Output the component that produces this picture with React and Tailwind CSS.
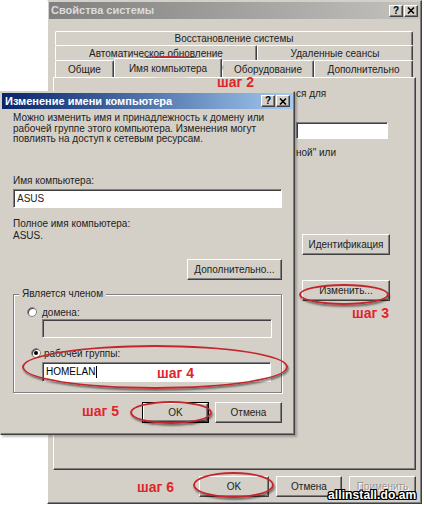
import React from "react";

// Windows classic (XP) look: two dialogs, one over the other, with red step marks

const raised =
  "bg-[#d4d0c8] border border-t-white border-l-white border-r-[#404040] border-b-[#404040] shadow-[inset_-1px_-1px_0_#808080]";
const sunken =
  "border border-t-[#808080] border-l-[#808080] border-r-white border-b-white shadow-[inset_1px_1px_0_#404040]";

function Button({ children, className = "", isDefault = false, disabled = false }) {
  const btn = (
    <div
      className={`${raised} flex items-center justify-center h-full w-full ${
        disabled ? "text-[#9a9690] [text-shadow:1px_1px_0_#fff]" : "text-[#222]"
      }`}
    >
      {children}
    </div>
  );
  if (isDefault) {
    return <div className={`border border-black ${className}`}>{btn}</div>;
  }
  return <div className={className}>{btn}</div>;
}

function CaptionButtons() {
  return (
    <div className="flex gap-[1px]">
      <div className={`${raised} w-[14px] h-[12px] flex items-center justify-center text-[10px] font-bold leading-none text-black`}>
        ?
      </div>
      <div className={`${raised} w-[14px] h-[12px] flex items-center justify-center`}>
        <svg width="8" height="7" viewBox="0 0 8 7">
          <path d="M1 0.5 L7 6.5 M7 0.5 L1 6.5" stroke="#000" strokeWidth="1.6" />
        </svg>
      </div>
    </div>
  );
}

function Tab({ label, className = "" }) {
  return (
    <div
      className={`flex items-center justify-center bg-[#d4d0c8] border-t border-l border-r border-t-white border-l-white border-r-[#404040] rounded-t-[2px] shadow-[inset_-1px_0_0_#808080] ${className}`}
    >
      {label}
    </div>
  );
}

function Radio({ checked }) {
  return (
    <span className="w-[10px] h-[10px] rounded-full bg-white border border-[#808080] shadow-[inset_1px_1px_0_#404040] flex items-center justify-center">
      {checked && <span className="w-[4px] h-[4px] rounded-full bg-black" />}
    </span>
  );
}

function Ellipse({ className }) {
  return (
    <div
      className={`absolute rounded-[50%] border-2 border-[#c4262c] shadow-[1px_2px_2px_rgba(0,0,0,0.45)] ${className}`}
    />
  );
}

function Step({ children, className }) {
  return (
    <div className={`absolute text-[14px] leading-[14px] font-bold text-[#e0252b] ${className}`}>
      {children}
    </div>
  );
}

function SystemProperties() {
  return (
    <div className="absolute left-[47px] top-0 w-[375px] h-[504px] bg-[#d4d0c8] border border-t-[#d4d0c8] border-l-white border-r-[#404040] border-b-[#404040] shadow-[inset_-1px_-1px_0_#808080] flex flex-col">
      {/* title */}
      <div className="mx-[1px] mt-[1px] h-[17px] bg-gradient-to-r from-[#808080] to-[#c4c2be] flex items-center justify-between pl-[2px] pr-[2px]">
        <span className="text-[11px] font-bold text-[#dcdcdc]">Свойства системы</span>
        <CaptionButtons />
      </div>

      {/* tabs */}
      <div className="mt-[12px] ml-[7px] w-[358px] flex flex-col text-[#222]">
        <Tab label="Восстановление системы" className="h-[14px] w-full" />
        <div className="flex h-[15px]">
          <Tab label="Автоматическое обновление" className="w-[202px]" />
          <Tab label="Удаленные сеансы" className="w-[156px]" />
        </div>
        <div className="flex h-[17px] items-end">
          <Tab label="Общие" className="w-[59px] h-[17px]" />
          <Tab label="Имя компьютера" className="w-[108px] h-[19px] relative z-10" />
          <Tab label="Оборудование" className="w-[92px] h-[17px]" />
          <Tab label="Дополнительно" className="w-[99px] h-[17px]" />
        </div>
      </div>

      {/* panel */}
      <div className="ml-[5px] w-[363px] h-[393px] border border-t-white border-l-white border-r-[#404040] border-b-[#404040] shadow-[inset_-1px_-1px_0_#808080] flex flex-col text-[#222]">
        <div className="ml-[242px] mt-[10px] leading-[11px]">ся для</div>
        <div className={`${sunken} bg-white ml-[242px] mt-[23px] w-[92px] h-[17px]`} />
        <div className="ml-[242px] mt-[8px] leading-[11px]">ной" или</div>
        <Button className="self-end mr-[25px] mt-[76px] w-[88px] h-[21px]">Идентификация</Button>
        <Button className="self-end mr-[25px] mt-[25px] w-[88px] h-[21px]">Изменить...</Button>
      </div>

      {/* bottom buttons */}
      <div className="mt-[6px] flex justify-end gap-[7px] pr-[5px] h-[21px]">
        <Button className="w-[70px] h-full">OK</Button>
        <Button className="w-[66px] h-full">Отмена</Button>
        <Button className="w-[67px] h-full" disabled>
          Применить
        </Button>
      </div>
    </div>
  );
}

function ChangeNameDialog() {
  return (
    <div className="absolute left-0 top-[91px] w-[295px] h-[344px] bg-[#d4d0c8] border border-t-[#d4d0c8] border-l-[#d4d0c8] border-r-[#404040] border-b-[#404040] shadow-[inset_-1px_-1px_0_#808080,2px_2px_2px_rgba(0,0,0,0.25)] flex flex-col text-[#222]">
      <div className="mx-[1px] mt-[1px] h-[16px] bg-gradient-to-r from-[#0a246a] to-[#a6caf0] flex items-center justify-between pl-[3px] pr-[3px]">
        <span className="text-[11px] font-bold text-white">Изменение имени компьютера</span>
        <CaptionButtons />
      </div>

      <div className="px-[12px] flex flex-col">
        <p className="mt-[4px] leading-[10.5px]">
          Можно изменить имя и принадлежность к домену или рабочей группе этого компьютера. Изменения могут повлиять на доступ к сетевым ресурсам.
        </p>

        <div className="mt-[30px] leading-[11px]">Имя компьютера:</div>
        <div className={`${sunken} bg-white mt-[3px] h-[19px] flex items-center pl-[3px]`}>ASUS</div>

        <div className="mt-[10px] leading-[11px]">Полное имя компьютера:</div>
        <div className="mt-[1px] leading-[11px]">ASUS.</div>

        <Button className="self-end mt-[18px] w-[95px] h-[21px]">Дополнительно...</Button>

        {/* group box */}
        <div className="relative mt-[14px] h-[99px] border border-[#808080] shadow-[1px_1px_0_#fff,inset_1px_1px_0_#fff] flex flex-col">
          <span className="absolute -top-[7px] left-[5px] px-[3px] bg-[#d4d0c8] leading-[11px]">Является членом</span>
          <div className="mt-[12px] ml-[13px] flex items-center gap-[5px] leading-[11px]">
            <Radio />
            <span>домена:</span>
          </div>
          <div className={`${sunken} bg-[#d4d0c8] ml-[28px] mt-[1px] w-[230px] h-[19px]`} />
          <div className="mt-[10px] ml-[17px] flex items-center gap-[3px] leading-[11px]">
            <Radio checked />
            <span>рабочей группы:</span>
          </div>
          <div className={`${sunken} bg-white ml-[28px] mt-[3px] w-[229px] h-[20px] flex items-center pl-[3px] text-black`}>
            HOMELAN<span className="ml-[1px] w-[1px] h-[12px] bg-black" />
          </div>
        </div>

        <div className="mt-[9px] flex justify-end gap-[6px] h-[21px]">
          <Button className="w-[67px] h-full" isDefault>
            OK
          </Button>
          <Button className="w-[67px] h-full">Отмена</Button>
        </div>
      </div>
    </div>
  );
}

export default function App() {
  return (
    <div className="relative w-[424px] h-[505px] overflow-hidden bg-white font-['Liberation_Sans',Arial,sans-serif] text-[10px]">
      <SystemProperties />

      <Ellipse className="left-[118px] top-[56px] w-[104px] h-[19px]" />
      <Step className="left-[217px] top-[75px]">шаг 2</Step>
      <Ellipse className="left-[299px] top-[284px] w-[90px] h-[21px]" />
      <Step className="left-[352px] top-[306px]">шаг 3</Step>

      <ChangeNameDialog />

      <Ellipse className="left-[22px] top-[345px] w-[266px] h-[44px]" />
      <Step className="left-[157px] top-[366px]">шаг 4</Step>
      <Step className="left-[82px] top-[404px]">шаг 5</Step>
      <Ellipse className="left-[130px] top-[401px] w-[82px] h-[23px]" />

      <Ellipse className="left-[193px] top-[472px] w-[81px] h-[26px]" />
      <Step className="left-[137px] top-[480px]">шаг 6</Step>

      <div className="absolute left-[328px] top-[489px] text-[12px] leading-[13px] font-bold tracking-[0.1px] text-white [text-shadow:1px_0_0_#000,-1px_0_0_#000,0_1px_0_#000,0_-1px_0_#000,1px_1px_0_#000,-1px_-1px_0_#000,1px_-1px_0_#000,-1px_1px_0_#000]">
        allinstall.do.am
      </div>
    </div>
  );
}
